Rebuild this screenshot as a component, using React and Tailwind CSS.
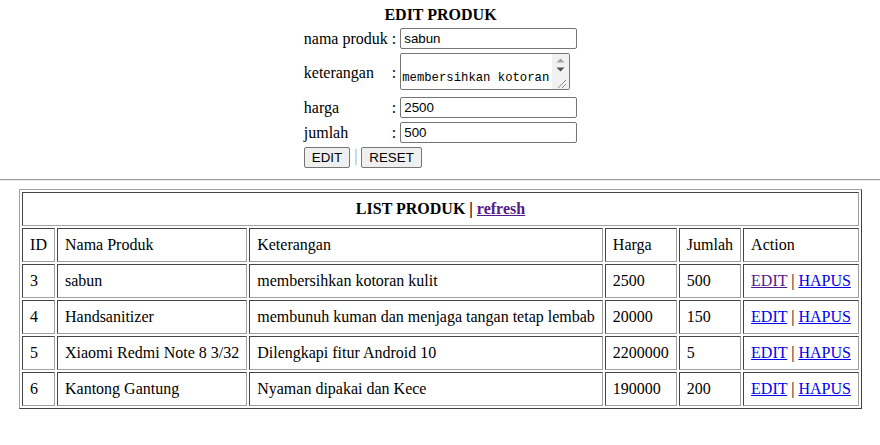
const ROWS = [
  { id: 3, nama: 'sabun', ket: 'membersihkan kotoran kulit', harga: 2500, jumlah: 500, visited: true },
  { id: 4, nama: 'Handsanitizer', ket: 'membunuh kuman dan menjaga tangan tetap lembab', harga: 20000, jumlah: 150 },
  { id: 5, nama: 'Xiaomi Redmi Note 8 3/32', ket: 'Dilengkapi fitur Android 10', harga: 2200000, jumlah: 5 },
  { id: 6, nama: 'Kantong Gantung', ket: 'Nyaman dipakai dan Kece', harga: 190000, jumlah: 200 },
]

const cell = 'border border-t-[#444] border-l-[#444] border-r-[#a0a0a0] border-b-[#a0a0a0] px-[7px] py-[7px] text-left font-normal whitespace-nowrap'
const titleCell = 'border border-t-[#444] border-l-[#444] border-r-[#a0a0a0] border-b-[#a0a0a0] px-[7px] py-[7px] text-center font-bold whitespace-nowrap'

function Input({ value }) {
  return (
    <div className="w-[177px] h-[21px] border border-[#767676] rounded-[2px] px-[3px] flex items-center font-['Liberation_Sans',Arial,sans-serif] text-[13.33px] leading-[15px]">
      {value}
    </div>
  )
}

function FakeTextarea({ value }) {
  return (
    <div className="w-[170px] h-[37px] mb-[3px] border border-[#767676] rounded-[2px] flex overflow-hidden">
      <div className="flex-1 flex items-end pl-[1px] pb-[4px] overflow-hidden whitespace-nowrap font-['Liberation_Mono',monospace] text-[12.25px] leading-[14px]">
        {value}
      </div>
      <div className="w-[17px] bg-[#f1f1f1] flex flex-col items-center">
        <svg width="17" height="9" viewBox="0 0 17 9" className="mt-[2px]">
          <path d="M4.5 6.5 L8.5 2.5 L12.5 6.5 Z" fill="#a3a3a3" />
        </svg>
        <svg width="17" height="9" viewBox="0 0 17 9">
          <path d="M4.5 2.5 L8.5 6.5 L12.5 2.5 Z" fill="#505050" />
        </svg>
        <svg width="17" height="14" viewBox="0 0 17 14" className="mt-auto">
          <path d="M14 5 L6 13 M14 9 L10 13" stroke="#8a8a8a" strokeWidth="1" />
        </svg>
      </div>
    </div>
  )
}

function Button({ children }) {
  return (
    <button className="h-[21px] px-[7px] border border-[#767676] bg-[#efefef] rounded-[2px] font-['Liberation_Sans',Arial,sans-serif] text-[13.33px] leading-[15px] align-middle">
      {children}
    </button>
  )
}

export default function App() {
  return (
    <div className="min-h-[445px] pl-[1px] bg-white text-black font-['Liberation_Serif','Times_New_Roman',serif] text-[16px] leading-[18px]">
      {/* form edit */}
      <table className="mx-auto mt-[3px] border-separate border-spacing-[2px]">
        <tbody>
          <tr>
            <th colSpan={3} className="p-[1px] text-center font-bold">EDIT PRODUK</th>
          </tr>
          <tr>
            <td className="p-[1px] align-middle">nama produk</td>
            <td className="p-[1px] align-middle">:</td>
            <td className="p-[1px] align-middle"><Input value="sabun" /></td>
          </tr>
          <tr>
            <td className="p-[1px] align-middle">keterangan</td>
            <td className="p-[1px] align-middle">:</td>
            <td className="p-[1px] align-middle"><FakeTextarea value="membersihkan kotoran" /></td>
          </tr>
          <tr>
            <td className="p-[1px] align-middle">harga</td>
            <td className="p-[1px] align-middle">:</td>
            <td className="p-[1px] align-middle"><Input value="2500" /></td>
          </tr>
          <tr>
            <td className="p-[1px] align-middle">jumlah</td>
            <td className="p-[1px] align-middle">:</td>
            <td className="p-[1px] align-middle"><Input value="500" /></td>
          </tr>
          <tr>
            <td colSpan={3} className="p-[1px] whitespace-nowrap">
              <Button>EDIT</Button>
              <span className="text-[#9a9ac8]"> | </span>
              <Button>RESET</Button>
            </td>
          </tr>
        </tbody>
      </table>

      <div className="-ml-[1px] mt-[8px] h-[2px] border-t border-[#9a9a9a] border-b border-b-[#eeeeee]" />

      {/* list produk */}
      <table className="mx-auto mt-[8px] border-separate border-spacing-[2px] border border-t-[#a0a0a0] border-l-[#a0a0a0] border-r-[#404040] border-b-[#404040]">
        <tbody>
          <tr>
            <th colSpan={6} className={titleCell}>
              LIST PRODUK | <a href="#" className="underline text-[#551a8b]">refresh</a>
            </th>
          </tr>
          <tr>
            <td className={cell}>ID</td>
            <td className={cell}>Nama Produk</td>
            <td className={cell}>Keterangan</td>
            <td className={cell}>Harga</td>
            <td className={cell}>Jumlah</td>
            <td className={cell}>Action</td>
          </tr>
          {ROWS.map((r) => (
            <tr key={r.id}>
              <td className={cell}>{r.id}</td>
              <td className={cell}>{r.nama}</td>
              <td className={cell}>{r.ket}</td>
              <td className={cell}>{r.harga}</td>
              <td className={cell}>{r.jumlah}</td>
              <td className={cell}>
                <a href="#" className={r.visited ? 'underline text-[#551a8b]' : 'underline text-[#0000ee]'}>EDIT</a>
                {' | '}
                <a href="#" className="underline text-[#0000ee]">HAPUS</a>
              </td>
            </tr>
          ))}
        </tbody>
      </table>
    </div>
  )
}
